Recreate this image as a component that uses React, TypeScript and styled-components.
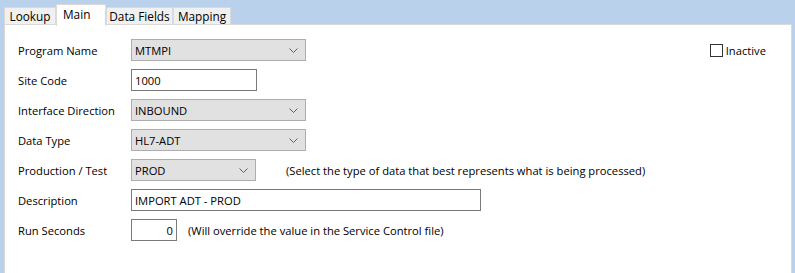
import React from "react";
import styled, { createGlobalStyle } from "styled-components";

const GlobalStyle = createGlobalStyle`
  html, body {
    margin: 0;
    padding: 0;
    background: #b9d1ea;
  }
  body {
    font-family: "Open Sans", "Noto Sans", sans-serif;
    font-size: 11.2px;
    color: #000;
  }
`;

const Window = styled.div`
  width: 795px;
  height: 273px;
  padding: 4px 3px 0 4px;
  box-sizing: border-box;
  display: flex;
  flex-direction: column;
  overflow: hidden;
`;

const TabStrip = styled.div`
  display: flex;
  align-items: flex-end;
  height: 21px;
`;

const Tab = styled.div<{ $active?: boolean; $w: number }>`
  width: ${({ $w }) => $w}px;
  height: ${({ $active }) => ($active ? "22px" : "18px")};
  position: relative;
  z-index: ${({ $active }) => ($active ? 1 : 0)};
  background: ${({ $active }) => ($active ? "#ffffff" : "#f0f0f0")};
  border: 1px solid #d9d9d9;
  border-bottom: ${({ $active }) => ($active ? "none" : "1px solid #d9d9d9")};
  margin-bottom: ${({ $active }) => ($active ? "-1px" : "0")};
  box-sizing: border-box;
  display: flex;
  justify-content: ${({ $active }) => ($active ? "flex-start" : "center")};
  align-items: ${({ $active }) => ($active ? "flex-start" : "center")};
  padding: ${({ $active }) => ($active ? "1px 0 0 6px" : "0")};
  font-size: 11.8px;
`;

const Panel = styled.div`
  flex: 1;
  background: #ffffff;
  border: 1px solid #d9d9d9;
  border-bottom: none;
  margin-top: -1px;
  padding: 14px 25px 0 13px;
  display: flex;
  justify-content: space-between;
`;

const Form = styled.div`
  display: flex;
  flex-direction: column;
  gap: 8px;
`;

const Row = styled.div`
  display: flex;
  align-items: center;
  height: 22px;
`;

const Label = styled.div`
  width: 113px;
`;

const Select = styled.div<{ $w: number }>`
  width: ${({ $w }) => $w}px;
  height: 22px;
  box-sizing: border-box;
  background: #e1e1e1;
  border: 1px solid #adadad;
  display: flex;
  align-items: center;
  justify-content: space-between;
  padding: 0 7px 0 3px;
`;

const Input = styled.div<{ $w: number; $right?: boolean }>`
  width: ${({ $w }) => $w}px;
  height: 22px;
  box-sizing: border-box;
  background: #ffffff;
  border: 1px solid #7a7a7a;
  display: flex;
  align-items: center;
  justify-content: ${({ $right }) => ($right ? "flex-end" : "flex-start")};
  padding: 0 3px;
`;

const Hint = styled.div<{ $gap: number }>`
  margin-left: ${({ $gap }) => $gap}px;
`;

const CheckWrap = styled.div`
  display: flex;
  align-items: center;
  gap: 3px;
  height: 22px;
`;

const Box = styled.div`
  width: 13px;
  height: 13px;
  box-sizing: border-box;
  border: 1px solid #333333;
  background: #ffffff;
`;

const Chevron = () => (
  <svg width="9" height="5" viewBox="0 0 9 5">
    <path d="M0.5 0.5 L4.5 4.5 L8.5 0.5" fill="none" stroke="#606060" strokeWidth="1" />
  </svg>
);

export default function App() {
  return (
    <>
      <GlobalStyle />
      <Window>
        <TabStrip>
          <Tab $w={52}>Lookup</Tab>
          <Tab $w={50} $active>
            Main
          </Tab>
          <Tab $w={67}>Data Fields</Tab>
          <Tab $w={58}>Mapping</Tab>
        </TabStrip>
        <Panel>
          <Form>
            <Row>
              <Label>Program Name</Label>
              <Select $w={175}>
                <span>MTMPI</span>
                <Chevron />
              </Select>
            </Row>
            <Row>
              <Label>Site Code</Label>
              <Input $w={126}>1000</Input>
            </Row>
            <Row>
              <Label>Interface Direction</Label>
              <Select $w={175}>
                <span>INBOUND</span>
                <Chevron />
              </Select>
            </Row>
            <Row>
              <Label>Data Type</Label>
              <Select $w={175}>
                <span>HL7-ADT</span>
                <Chevron />
              </Select>
            </Row>
            <Row>
              <Label>Production / Test</Label>
              <Select $w={125}>
                <span>PROD</span>
                <Chevron />
              </Select>
              <Hint $gap={30}>
                (Select the type of data that best represents what is being processed)
              </Hint>
            </Row>
            <Row>
              <Label>Description</Label>
              <Input $w={350}>IMPORT ADT - PROD</Input>
            </Row>
            <Row>
              <Label>Run Seconds</Label>
              <Input $w={46} $right>
                0
              </Input>
              <Hint $gap={11}>(Will override the value in the Service Control file)</Hint>
            </Row>
          </Form>
          <CheckWrap>
            <Box />
            <span>Inactive</span>
          </CheckWrap>
        </Panel>
      </Window>
    </>
  );
}
